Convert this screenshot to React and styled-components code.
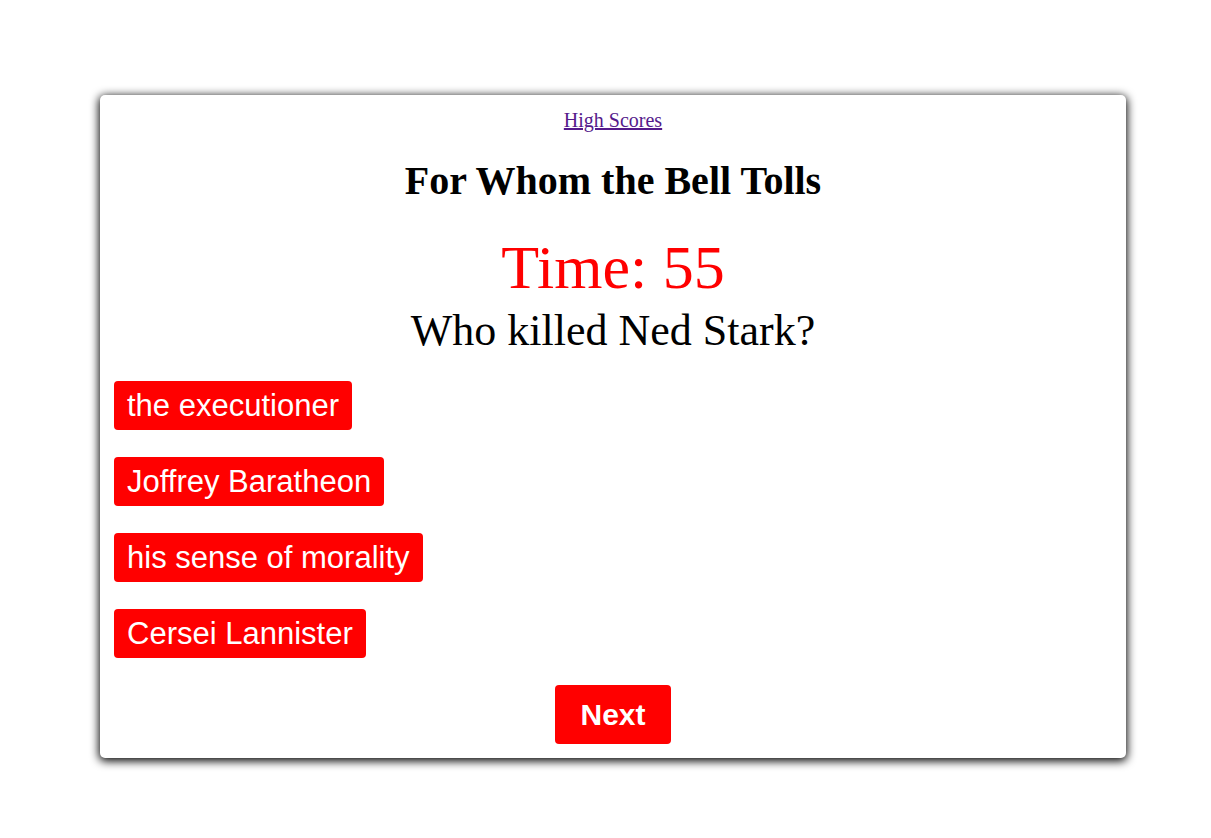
import React from "react";
import styled, { createGlobalStyle } from "styled-components";

const GlobalStyle = createGlobalStyle`
  body {
    margin: 0;
    background: #fff;
    font-family: "Liberation Serif", "Times New Roman", serif;
  }
`;

const Page = styled.div`
  min-height: 100vh;
  box-sizing: border-box;
  padding: 95px 0 40px 100px;
`;

const Card = styled.div`
  width: 1026px;
  height: 663px;
  box-sizing: border-box;
  background: #fff;
  border-radius: 5px;
  box-shadow: 0 2px 10px 1px #000;
  padding: 14px 14px 14px;
  display: flex;
  flex-direction: column;
`;

const TopLink = styled.a`
  align-self: center;
  font-size: 20px;
  line-height: 23px;
  color: #551a8b;
  text-decoration: underline;
  cursor: pointer;
`;

const Title = styled.h1`
  margin: 26px 0 0;
  text-align: center;
  font-size: 40px;
  line-height: 46px;
  font-weight: bold;
`;

const Timer = styled.div`
  margin-top: 29px;
  text-align: center;
  color: #ff0000;
  font-size: 62px;
  line-height: 68px;
`;

const Question = styled.div`
  margin-top: 6px;
  text-align: center;
  font-size: 44px;
  line-height: 48px;
`;

const Choices = styled.div`
  margin-top: 26px;
  display: flex;
  flex-direction: column;
  align-items: flex-start;
  gap: 27px;
`;

const Choice = styled.button`
  height: 49px;
  padding: 0 13px;
  border: none;
  border-radius: 4px;
  background: #ff0000;
  color: #fff;
  font-family: "Liberation Sans", Arial, sans-serif;
  font-size: 31px;
  cursor: pointer;
`;

const NextButton = styled.button`
  align-self: center;
  margin-top: 27px;
  height: 59px;
  padding: 0 25px;
  border: none;
  border-radius: 4px;
  background: #ff0000;
  color: #fff;
  font-family: "Liberation Sans", Arial, sans-serif;
  font-weight: bold;
  font-size: 30px;
  cursor: pointer;
`;

const answers = [
  "the executioner",
  "Joffrey Baratheon",
  "his sense of morality",
  "Cersei Lannister",
];

export default function App() {
  return (
    <>
      <GlobalStyle />
      <Page>
        <Card>
          <TopLink href="#">High Scores</TopLink>
          <Title>For Whom the Bell Tolls</Title>
          <Timer>Time: 55</Timer>
          <Question>Who killed Ned Stark?</Question>
          <Choices>
            {answers.map((a) => (
              <Choice key={a}>{a}</Choice>
            ))}
          </Choices>
          <NextButton>Next</NextButton>
        </Card>
      </Page>
    </>
  );
}
